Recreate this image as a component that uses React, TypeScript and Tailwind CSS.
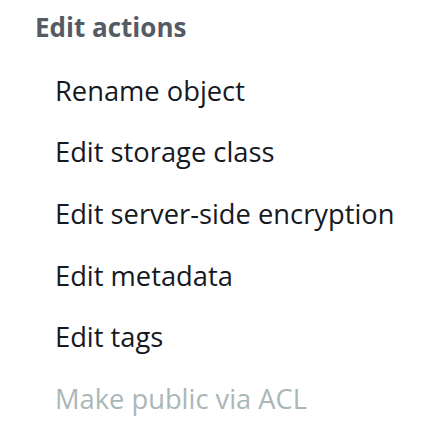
const items = [
  { label: "Rename object" },
  { label: "Edit storage class" },
  { label: "Edit server-side encryption" },
  { label: "Edit metadata" },
  { label: "Edit tags" },
  { label: "Make public via ACL", disabled: true },
];

export default function App() {
  return (
    <div className="w-[428px] h-[430px] bg-white overflow-hidden font-['Open_Sans',sans-serif]">
      {/* GROUP HEADER */}
      <div className="pl-[35px] pt-[9px] text-[26px] leading-[37px] font-bold text-[#545b64]">
        Edit actions
      </div>

      {/* ITEMS */}
      <ul className="mt-[14px]">
        {items.map((item) => (
          <li
            key={item.label}
            className={`pl-[55px] flex items-center h-[61.6px] text-[27.3px] leading-[38px] ${
              item.disabled ? "text-[#aab7b8]" : "text-[#16191f]"
            }`}
          >
            {item.label}
          </li>
        ))}
      </ul>
    </div>
  );
}
